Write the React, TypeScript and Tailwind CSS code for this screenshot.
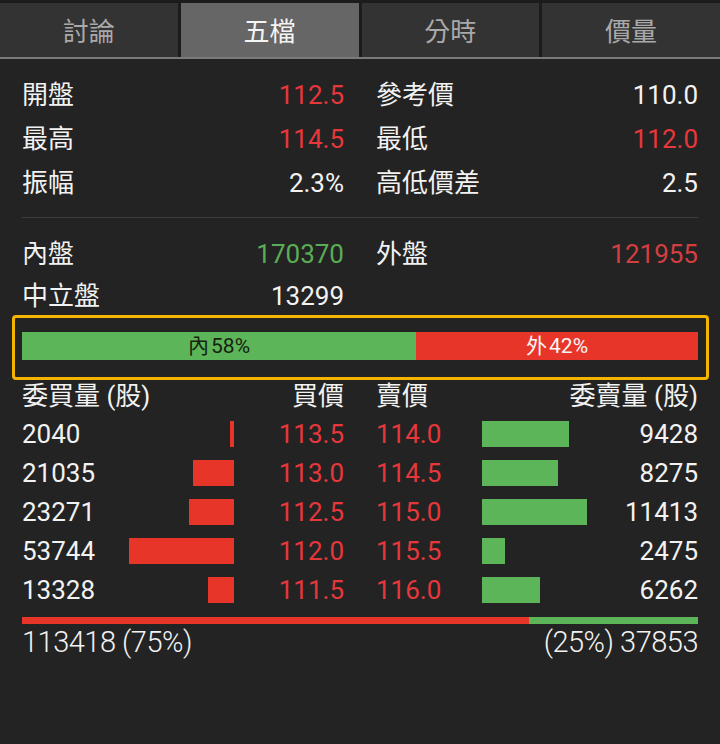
import React from "react";

const RED = "text-[#e6373b]";

type Stat = { label: string; value: string; color?: string };

const topStats: [Stat, Stat][] = [
  [
    { label: "開盤", value: "112.5", color: RED },
    { label: "參考價", value: "110.0" },
  ],
  [
    { label: "最高", value: "114.5", color: RED },
    { label: "最低", value: "112.0", color: RED },
  ],
  [
    { label: "振幅", value: "2.3%" },
    { label: "高低價差", value: "2.5" },
  ],
];

const bids = [
  { qty: 2040, price: "113.5" },
  { qty: 21035, price: "113.0" },
  { qty: 23271, price: "112.5" },
  { qty: 53744, price: "112.0" },
  { qty: 13328, price: "111.5" },
];

const asks = [
  { qty: 9428, price: "114.0" },
  { qty: 8275, price: "114.5" },
  { qty: 11413, price: "115.0" },
  { qty: 2475, price: "115.5" },
  { qty: 6262, price: "116.0" },
];

const BAR_MAX = 105;
const NUM = "text-[26px]";

function StatCell({ stat }: { stat: Stat }) {
  return (
    <div className="flex items-center justify-between">
      <span className="text-[#f2f2f2]">{stat.label}</span>
      <span className={`${NUM} ${stat.color ?? "text-[#f2f2f2]"}`}>{stat.value}</span>
    </div>
  );
}

export default function App() {
  const tabs = ["討論", "五檔", "分時", "價量"];
  const maxBid = Math.max(...bids.map((b) => b.qty));
  const maxAsk = Math.max(...asks.map((a) => a.qty));

  return (
    <div
      className="w-[720px] h-[744px] bg-[#232323] text-[26px] leading-none overflow-hidden"
      style={{ fontFamily: 'Roboto, "Noto Sans CJK TC", sans-serif' }}
    >
      {/* Tabs */}
      <div className="bg-[#1c1c1c] pt-[3px]">
        <div className="grid grid-cols-4 gap-[3px]">
          {tabs.map((t, i) => (
            <div
              key={t}
              className={`h-[54px] pt-[3px] flex items-center justify-center text-[26px] ${
                i === 1 ? "bg-[#666666] text-[#f4f4f4]" : "bg-[#333333] text-[#a9a9a9]"
              }`}
            >
              {t}
            </div>
          ))}
        </div>
      </div>
      <div className="h-[2px] bg-[#7a7a7a]" />

      {/* Stats */}
      <div className="px-[22px] pt-[14px]">
        {topStats.map((row, i) => (
          <div key={i} className="h-[44px] grid grid-cols-2 gap-[32px]">
            <StatCell stat={row[0]} />
            <StatCell stat={row[1]} />
          </div>
        ))}
        <div className="mt-[12px] h-px bg-[#3c3c3c]" />
        <div className="pt-[15px]">
          <div className="h-[42px] grid grid-cols-2 gap-[32px]">
            <StatCell stat={{ label: "內盤", value: "170370", color: "text-[#5aad55]" }} />
            <StatCell stat={{ label: "外盤", value: "121955", color: "text-[#d33f41]" }} />
          </div>
          <div className="h-[42px] grid grid-cols-2 gap-[32px]">
            <StatCell stat={{ label: "中立盤", value: "13299" }} />
            <div />
          </div>
        </div>
      </div>

      {/* Inner/outer ratio */}
      <div className="-mt-[2px] ml-[12px] mr-[11px] h-[65px] border-[3px] border-[#f4b400] rounded-[4px] pl-[7px] pr-[8px] pt-[14px]">
        <div className="flex h-[28px] text-[21px]">
          <div className="w-[58.3%] bg-[#5db55a] text-[#17230f] flex items-center justify-center gap-[2px]">
            <span>內</span>
            <span>58%</span>
          </div>
          <div className="flex-1 bg-[#e8352a] text-[#f6f6f6] flex items-center justify-center gap-[2px]">
            <span>外</span>
            <span>42%</span>
          </div>
        </div>
      </div>

      {/* Order book */}
      <div className="px-[22px]">
        <div className="h-[32px] grid grid-cols-2 gap-[32px] text-[#f2f2f2]">
          <div className="flex items-center justify-between">
            <span>委買量 (股)</span>
            <span>買價</span>
          </div>
          <div className="flex items-center justify-between">
            <span>賣價</span>
            <span>委賣量 (股)</span>
          </div>
        </div>
        <div className="mt-[2px]">
          {bids.map((b, i) => {
            const a = asks[i];
            return (
              <div key={i} className="h-[39px] grid grid-cols-2 gap-[32px]">
                <div className="flex items-center">
                  <span className={`flex-1 text-[#f2f2f2] ${NUM}`}>{b.qty}</span>
                  <div className="w-[105px] flex justify-end">
                    <div
                      className="h-[26px] bg-[#e8352a]"
                      style={{ width: Math.max(3, Math.round((b.qty / maxBid) * BAR_MAX)) }}
                    />
                  </div>
                  <span className={`w-[110px] text-right ${RED} ${NUM}`}>{b.price}</span>
                </div>
                <div className="flex items-center">
                  <span className={`w-[106px] ${RED} ${NUM}`}>{a.price}</span>
                  <div className="w-[105px] flex justify-start">
                    <div
                      className="h-[26px] bg-[#5db55a]"
                      style={{ width: Math.round((a.qty / maxAsk) * BAR_MAX) }}
                    />
                  </div>
                  <span className={`flex-1 text-right text-[#f2f2f2] ${NUM}`}>{a.qty}</span>
                </div>
              </div>
            );
          })}
        </div>

        {/* Totals */}
        <div className="mt-[8px] h-[7px] flex">
          <div className="w-[75%] bg-[#e8352a]" />
          <div className="flex-1 bg-[#5db55a]" />
        </div>
        <div className="h-[36px] flex items-center justify-between text-[#f2f2f2] text-[29px] font-light tracking-[-0.5px]">
          <span>113418 (75%)</span>
          <span>(25%) 37853</span>
        </div>
      </div>
    </div>
  );
}
